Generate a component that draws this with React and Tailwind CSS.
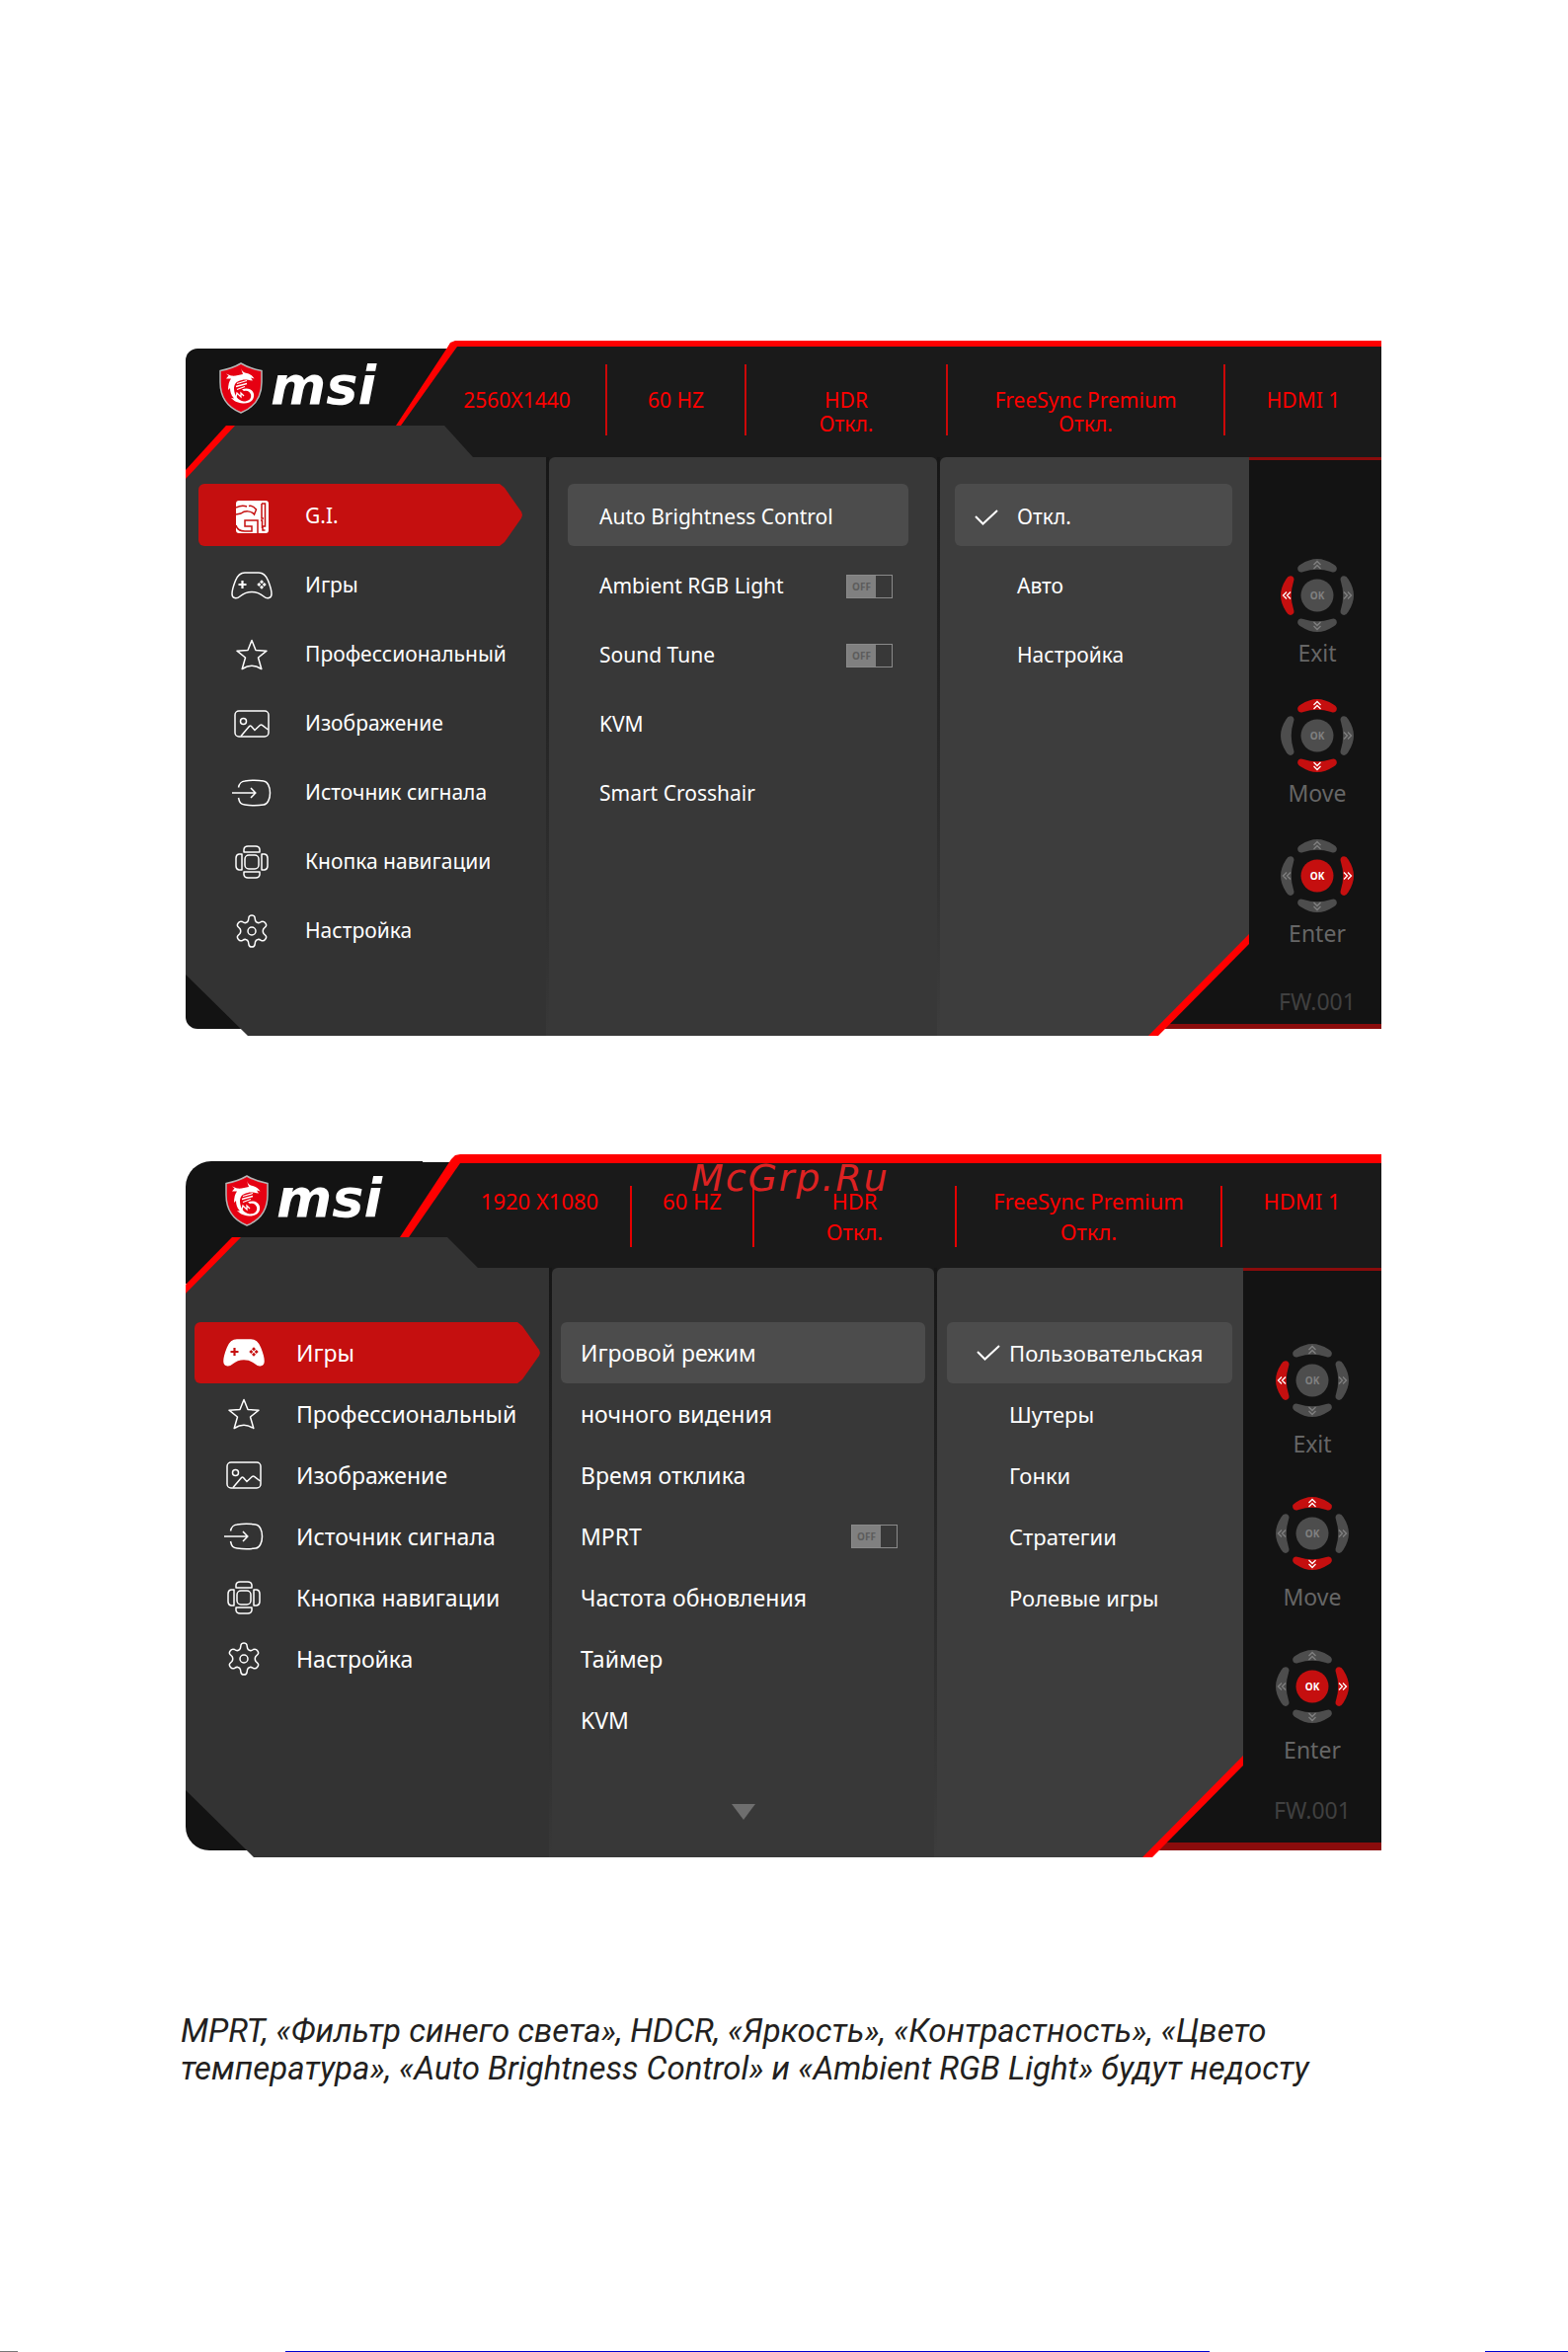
import { useState } from 'react';

const GamepadIcon = ({ filled }) => (
    <svg className="w-[42px] h-7" viewBox="0 0 42 28" fill={filled ? '#fff' : 'none'} stroke="#fff" strokeWidth="1.5" strokeLinejoin="round">
        <path d="M14 1H28C33 1 35.500 4 37.500 9C39.500 14 41 19 41 22.500C41 27 36.500 28 33 25C29.500 22 26 20.500 21 20.500S12.500 22 9 25C5.500 28 1 27 1 22.500C1 19 2.500 14 4.500 9C6.500 4 9 1 14 1Z" />
        <path d="M11.500 9V17M7.500 13H15.500" stroke={filled ? '#c50f0f' : '#fff'} strokeWidth="2.200" />
        <g fill={filled ? '#c50f0f' : '#fff'} stroke="none">
            <path d="M31 8.300L33 10.300L31 12.300L29 10.300ZM31 13.700L33 15.700L31 17.700L29 15.700ZM28.300 11L30.300 13L28.300 15L26.300 13ZM33.700 11L35.700 13L33.700 15L31.700 13Z" />
        </g>
    </svg>
);

const GiIcon = () => (
    <svg className="size-[33px]" viewBox="0 0 33 33" fill="none">
        <rect width="33" height="33" rx="3" fill="#fff" />
        <g stroke="#c50f0f" strokeWidth="1.500">
            <path d="M0 7C4 5 7 4.500 11 6M13 5.500C16 4.500 18 6 20.500 9L18.500 14C15 10 9 10 5 13L0 14" />
            <path d="M0 25C1 29 5 31 9 31H16V26H9V20H22V33" />
            <path d="M26 3H29.500V26H27V30H29.500M26 3V18H28M25 20H26.500V28" />
        </g>
    </svg>
);

const StarIcon = () => (
    <svg className="size-8" viewBox="0 0 32 32" fill="none" stroke="#fff" strokeWidth="1.500" strokeLinejoin="round">
        <path d="M16 1.500L20 11.500L31 12.200L22.500 19L25.800 30.500C22 28.200 19 27.300 16 27.300S10 28.200 6.200 30.500L9.500 19L1 12.200L12 11.500Z" />
    </svg>
);

const ImageIcon = () => (
    <svg className="w-9 h-7" viewBox="0 0 36 28" fill="none" stroke="#fff" strokeWidth="1.500">
        <rect x="1" y="1" width="34" height="26" rx="4" />
        <circle cx="9.500" cy="11.500" r="3" />
        <path d="M7 26.500L15.500 16.500Q16.500 15.500 17.500 16.500L21 20.500L26.500 15.300Q27.500 14.500 28.500 15.300L34.500 20" />
    </svg>
);

const SourceIcon = () => (
    <svg className="w-10 h-7" viewBox="0 0 40 28" fill="none" stroke="#fff" strokeWidth="1.500">
        <path d="M6.500 8.500C7.500 4 9 2.500 13 2C19 1 26 1 32 2C36 2.500 38.500 8 38.500 14S36 25.500 32 26C26 27 19 27 13 26C9 25.500 7.500 24 6.500 19" />
        <path d="M0 14H23.500M19 9L23.800 14L19 19" />
    </svg>
);

const NavKeyIcon = () => (
    <svg className="size-[34px]" viewBox="0 0 34 34" fill="none" stroke="#fff" strokeWidth="1.500" strokeLinejoin="round">
        <rect x="10" y="10" width="14" height="14" rx="4" />
        <path d="M9 7V4Q9.500 1 13 1H21Q24.500 1 25 4V7ZM9 27V30Q9.500 33 13 33H21Q24.500 33 25 30V27Z" />
        <path d="M7 9H4Q1 9.500 1 13V21Q1 24.500 4 25H7ZM27 9H30Q33 9.500 33 13V21Q33 24.500 30 25H27Z" />
    </svg>
);

const GearIcon = () => (
    <svg className="w-8 h-[34px]" viewBox="0 0 32 34" fill="none" stroke="#fff" strokeWidth="1.500" strokeLinejoin="round">
        <path d="M13 3Q13.500 1 16 1T19 3L19.500 6Q20 8 22 8.500Q23.500 9 25.500 7.500Q28 6.500 29.500 8.500Q31.500 11 30 12.500L28 14.500Q26.500 17 28 19.500L30 21.500Q31.500 23 29.500 25.500Q28 27.500 25.500 26.500Q23.500 25 22 25.500Q20 26 19.500 28L19 31Q18.500 33 16 33T13 31L12.500 28Q12 26 10 25.500Q8.500 25 6.500 26.500Q4 27.500 2.500 25.500Q.5 23 2 21.500L4 19.500Q5.500 17 4 14.500L2 12.500Q.5 11 2.500 8.500Q4 6.500 6.500 7.500Q8.500 9 10 8.500Q12 8 12.500 6Z" />
        <circle cx="16" cy="17" r="4" />
    </svg>
);

const CheckIcon = () => (
    <svg className="w-6 h-4 shrink-0" viewBox="0 0 24 16" fill="none" stroke="#fff" strokeWidth="2">
        <path d="M1 7L8.500 14.500L23 1" />
    </svg>
);

const Shield = () => (
    <svg className="w-11 h-[52px]" viewBox="0 0 44 52" fill="none">
        <path d="M22 1C27 4 35 7 43 8.500V20C43 34 37 45 22 51C7 45 1 34 1 20V8.500C9 7 17 4 22 1Z" fill="#e60012" stroke="#b5b5b5" strokeWidth="1.500" />
        <path d="M22 6C23 9 25 10.500 28 11C32 12 34 14 35.500 16.500L32 15.500L34 18.500C29 18 26 17 23 18C17 19 15 22 15 27C15.500 34 19 38.500 25 39.500C30 39.500 33 36.500 32 32.500C31 29 28 28 25 29L23 27.500C28 25 34 27 35 32C36 38 31 42 24 41.500C18 41 15 39 12 36L15 36.500C12 33 11 30 11 26L9 28C9 23 10 19 12 16.500L7 16.500L9.500 13.500L7 11.500L12 13.500C16 14 20 13 24 12Z" fill="#fff" />
        <path d="M18 21.500L28 18.500M17 24.500L28 21.500M18 27.500L26 24.500M13 33L17 35L18 31L22 35V31L25 34" stroke="#fff" strokeWidth="1.300" />
    </svg>
);

const LOBES = ['up', 'right', 'down', 'left'];
const TURN = { up: 'rotate(0 38 38)', right: 'rotate(90 38 38)', down: 'rotate(180 38 38)', left: 'rotate(270 38 38)' };

const Pad = ({ active, bare }) => (
    <svg className="size-[76px]" viewBox="0 0 76 76">
        {LOBES.map((side) => (
            <g key={side} transform={TURN[side]}>
                <path
                    d="M21.500 6.500Q30 1 38 1T54.500 6.500Q59 9 57.500 12.500Q56 15.500 52 14Q38 9.500 24 14Q20 15.500 18.500 12.500Q17 9 21.500 6.500Z"
                    fill={active.includes(side) ? '#c50f0f' : '#4d4d4d'}
                />
                {bare !== side && (
                    <path
                        d="M34.500 7L38 3.500L41.500 7M34.500 11L38 7.500L41.500 11"
                        fill="none"
                        stroke={active.includes(side) ? '#fff' : '#808080'}
                        strokeWidth="1.300"
                    />
                )}
            </g>
        ))}
        <circle cx="38" cy="38" r="16.500" fill={active.includes('ok') ? '#c50f0f' : '#4d4d4d'} />
        <text x="38" y="42" textAnchor="middle" className="text-[10px] font-bold" fill={active.includes('ok') ? '#fff' : '#808080'}>OK</text>
    </svg>
);

const Toggle = ({ id }) => (
    <span className="grid w-[47px] h-6 items-center">
        <input
            id={id}
            type="checkbox"
            className="appearance-none col-start-1 row-start-1 w-full h-full border border-[#8a8a8a] bg-[linear-gradient(to_right,#808080_29px,#383838_29px)]"
        />
        <span className="col-start-1 row-start-1 pl-[6px] text-[10px] leading-6 font-bold text-[#5c5c5c] pointer-events-none">OFF</span>
    </span>
);

const MENU = {
    games: { label: 'Игры', icon: <GamepadIcon /> },
    pro: { label: 'Профессиональный', icon: <StarIcon /> },
    image: { label: 'Изображение', icon: <ImageIcon /> },
    source: { label: 'Источник сигнала', icon: <SourceIcon /> },
    navkey: { label: 'Кнопка навигации', icon: <NavKeyIcon /> },
    setup: { label: 'Настройка', icon: <GearIcon /> },
};

const SCREENS = [
    {
        id: 'gi',
        text: 'text-[21px]',
        // header
        header: 'h-[118px]',
        brandBg: 'top-2 rounded-tl-xl',
        brand: 'pt-[22px] pl-[34px]',
        redShape: '[clip-path:polygon(213px_86px,265px_7px,268px_2px,273px_0,100%_0,100%_100%,240px_100%)]',
        darkShape: '[clip-path:polygon(218px_86px,275px_6px,100%_6px,100%_100%,240px_100%)]',
        info: 'mt-6 h-[72px] ml-[246px] grid-cols-[181fr_141fr_204fr_281fr_158fr]',
        cell: 'pt-6 leading-6 border-[#cc0808]',
        status: [['2560X1440'], ['60 HZ'], ['HDR', 'Откл.'], ['FreeSync Premium', 'Откл.'], ['HDMI 1']],
        // columns
        nav: 'w-[365px] -mt-8 pt-[59px] pb-[76px] pl-[13px] pr-6 gap-[7px]',
        navRed: '[clip-path:polygon(41px_0,60px_0,0_64px,0_45px)]',
        navShape: '[clip-path:polygon(50px_0,262px_0,291px_32px,100%_32px,100%_100%,63px_100%,0_calc(100%-62px),0_54px)]',
        corner: 'rounded-bl-xl',
        navItem: 'h-[63px] pl-[33px] pt-[3px] gap-[33px]',
        mid: 'w-[393px] pt-[27px] pl-[19px] pr-[29px] gap-[7px]',
        midItem: 'h-[63px] pt-1 pl-8 pr-4',
        right: 'pt-[27px] pl-[15px] pr-[17px] gap-[7px]',
        rightItem: 'h-[63px] pt-1 pl-5',
        checkBox: 'w-[43px]',
        side: 'w-[134px] pt-[102px] pl-1',
        sideBorder: 'border-b-[5px]',
        pads: 'gap-[26px]',
        padLabel: 'leading-10',
        fw: 'mt-[31px]',
        bare: 'left',
        menu: [{ label: 'G.I.', icon: <GiIcon /> }, MENU.games, MENU.pro, MENU.image, MENU.source, MENU.navkey, MENU.setup],
        options: [
            { label: 'Auto Brightness Control' },
            { label: 'Ambient RGB Light', toggle: true },
            { label: 'Sound Tune', toggle: true },
            { label: 'KVM' },
            { label: 'Smart Crosshair' },
        ],
        values: ['Откл.', 'Авто', 'Настройка'],
    },
    {
        id: 'games',
        text: 'text-[22px]',
        header: 'h-[115px]',
        brandBg: 'top-[7px] rounded-tl-[26px]',
        brand: 'pt-[21px] pl-10',
        redShape: '[clip-path:polygon(217px_84px,269px_5px,273px_1px,278px_0,100%_0,100%_100%,240px_100%)]',
        darkShape: '[clip-path:polygon(226px_84px,278px_9px,100%_9px,100%_100%,240px_100%)]',
        info: 'mt-8 h-[60px] ml-[267px] grid-cols-[185fr_124fr_205fr_269fr_161fr]',
        cell: 'leading-[31px] border-[#e60000]',
        status: [['1920 X1080'], ['60 HZ'], ['HDR', 'Откл.'], ['FreeSync Premium', 'Откл.'], ['HDMI 1']],
        nav: 'w-[368px] -mt-[31px] pt-[86px] pb-[76px] pl-[9px] pr-[9px] text-[23px]',
        navRed: '[clip-path:polygon(47px_0,66px_0,0_68px,0_48px)]',
        navShape: '[clip-path:polygon(56px_0,265px_0,296px_31px,100%_31px,100%_100%,69px_100%,0_calc(100%-68px),0_57px)]',
        corner: 'rounded-bl-3xl',
        navItem: 'h-[62px] pl-[29px] gap-[32px]',
        mid: 'w-[387px] pt-[55px] pb-[38px] px-[9px] text-[23px]',
        midItem: 'h-[62px] pl-5 pr-7',
        right: 'pt-[55px] pl-[10px] pr-[11px]',
        rightItem: 'h-[62px] pl-[30px]',
        checkBox: 'w-[33px]',
        side: 'w-[140px] pt-[76px]',
        sideBorder: 'border-b-8',
        pads: 'gap-[27px]',
        padLabel: 'leading-[52px]',
        fw: 'mt-[17px]',
        menu: [{ label: 'Игры', icon: <GamepadIcon filled /> }, MENU.pro, MENU.image, MENU.source, MENU.navkey, MENU.setup],
        options: [
            { label: 'Игровой режим' },
            { label: 'ночного видения' },
            { label: 'Время отклика' },
            { label: 'MPRT', toggle: true },
            { label: 'Частота обновления' },
            { label: 'Таймер' },
            { label: 'KVM' },
        ],
        more: true,
        values: ['Пользовательская', 'Шутеры', 'Гонки', 'Стратегии', 'Ролевые игры'],
    },
];

function StatusBar({ screen }) {
    return (
        <header className={`relative ${screen.header}`}>
            <div className={`absolute left-0 -bottom-4 w-60 bg-[#131313] ${screen.brandBg}`} />
            <div className={`absolute left-60 bottom-0 w-20 bg-[#131313] top-2`} />
            <div className={`absolute inset-0 bg-[#ff0000] ${screen.redShape}`} />
            <div className={`absolute inset-0 bg-[#1a1a1a] ${screen.darkShape}`} />
            <div className="relative flex">
                <div className={`w-0 flex items-start gap-2 ${screen.brand}`}>
                    <span className="shrink-0"><Shield /></span>
                    <span className="text-white font-['DejaVu_Sans'] font-bold italic text-[54px] leading-[48px]">msi</span>
                </div>
                <dl className={`absolute left-0 right-0 grid text-center text-[#ff0000] ${screen.info}`}>
                    {screen.status.map(([name, value], i) => (
                        <div key={name} className={`${screen.cell} ${i < 4 ? 'border-r-2' : ''}`}>
                            <dt>{name}</dt>
                            {value && <dd>{value}</dd>}
                        </div>
                    ))}
                </dl>
            </div>
        </header>
    );
}

function Osd({ screen }) {
    const [section, setSection] = useState(0);
    const [option, setOption] = useState(0);
    const [value, setValue] = useState(0);

    return (
        <section className={`text-white ${screen.text}`}>
            <StatusBar screen={screen} />

            <div className="relative flex">
                <div className={`absolute right-0 top-0 bottom-[7px] w-60 bg-[#131313] border-t-[3px] border-[#8b0c0c] ${screen.sideBorder}`} />
                <div className="absolute left-80 right-40 top-0 h-3 bg-[#1a1a1a]" />

                {/* Sections */}
                <nav className={`relative shrink-0 flex flex-col ${screen.nav}`}>
                    <div className={`absolute left-0 bottom-[7px] w-20 h-24 bg-[#131313] ${screen.corner}`} />
                    <div className={`absolute inset-0 bg-[#ff0000] ${screen.navRed}`} />
                    <div className={`absolute inset-0 bg-[#333333] ${screen.navShape}`} />
                    {screen.menu.map((item, i) => (
                        <button
                            key={item.label}
                            onClick={() => setSection(i)}
                            className={`relative flex items-center text-left rounded-md ${screen.navItem} ${section === i ? 'bg-[#c50f0f] [clip-path:polygon(0_0,calc(100%-23px)_0,calc(100%-18px)_4px,calc(100%-1px)_45%,100%_50%,calc(100%-1px)_55%,calc(100%-18px)_calc(100%-4px),calc(100%-23px)_100%,0_100%)]' : ''}`}
                        >
                            <span className="w-[42px] shrink-0 flex justify-center">{item.icon}</span>
                            <span>{item.label}</span>
                        </button>
                    ))}
                </nav>

                <div className="relative w-[3px] shrink-0 bg-linear-to-b from-[#161616] to-[#383838]" />

                {/* Options of the section */}
                <div className={`relative shrink-0 flex flex-col rounded-t-md bg-[#383838] ${screen.mid}`}>
                    {screen.options.map((item, i) => item.toggle ? (
                        <label key={item.label} htmlFor={`${screen.id}-${i}`} className={`flex items-center justify-between ${screen.midItem}`}>
                            <span>{item.label}</span>
                            <Toggle id={`${screen.id}-${i}`} />
                        </label>
                    ) : (
                        <button
                            key={item.label}
                            onClick={() => setOption(i)}
                            className={`flex items-center text-left rounded-md ${screen.midItem} ${option === i ? 'bg-[#4c4c4c]' : ''}`}
                        >
                            {item.label}
                        </button>
                    ))}
                    {screen.more && (
                        <svg className="w-6 h-4 mt-[54px] self-center" viewBox="0 0 24 16" fill="#6e6e6e">
                            <path d="M0 0H24L12 16Z" />
                        </svg>
                    )}
                </div>

                <div className="relative w-[3px] shrink-0 bg-linear-to-b from-[#161616] to-[#3d3d3d]" />

                {/* Values of the option */}
                <div className={`relative flex-1 flex flex-col ${screen.right}`}>
                    <div className="absolute inset-0 bg-[#ff0000] rounded-tl-md [clip-path:polygon(0_100px,100%_100px,100%_calc(100%-93px),calc(100%-92px)_100%,0_100%)]" />
                    <div className="absolute inset-0 bg-[#3d3d3d] rounded-tl-md [clip-path:polygon(0_0,100%_0,100%_calc(100%-103px),calc(100%-102px)_100%,0_100%)]" />
                    {screen.values.map((label, i) => (
                        <button
                            key={label}
                            onClick={() => setValue(i)}
                            className={`relative flex items-center text-left rounded-md ${screen.rightItem} ${value === i ? 'bg-[#4c4c4c]' : ''}`}
                        >
                            <span className={`shrink-0 ${screen.checkBox}`}>{value === i && <CheckIcon />}</span>
                            {label}
                        </button>
                    ))}
                </div>

                {/* Joystick hints */}
                <aside className={`relative shrink-0 flex flex-col items-center text-[#666666] text-[23px] ${screen.side}`}>
                    <div className={`flex flex-col items-center ${screen.pads}`}>
                        <div className="flex flex-col items-center">
                            <Pad active={['left']} />
                            <span className={screen.padLabel}>Exit</span>
                        </div>
                        <div className="flex flex-col items-center">
                            <Pad active={['up', 'down']} bare={screen.bare} />
                            <span className={screen.padLabel}>Move</span>
                        </div>
                        <div className="flex flex-col items-center">
                            <Pad active={['ok', 'right']} />
                            <span className={screen.padLabel}>Enter</span>
                        </div>
                    </div>
                    <span className={`leading-9 text-[#404040] ${screen.fw}`}>FW.001</span>
                </aside>
            </div>
        </section>
    );
}

export default function App() {
    return (
        <div className="bg-white font-['Noto_Sans',sans-serif]">
            <main className="pt-[345px] pl-[188px] pr-[189px]">
                <Osd screen={SCREENS[0]} />
                <div className="relative mt-[120px]">
                    <Osd screen={SCREENS[1]} />
                    <span className="absolute top-0 left-[512px] text-[#dd2222] font-['DejaVu_Sans'] italic text-[38px] leading-[48px] tracking-wider">McGrp.Ru</span>
                </div>
            </main>

            <p className="mt-[157px] ml-[183px] text-[#231f20] font-['Roboto'] italic text-[33px] leading-[38px]">
                MPRT, «Фильтр синего света», HDCR, «Яркость», «Контрастность», «Цвето<br />
                температура», «Auto Brightness Control» и «Ambient RGB Light» будут недосту
            </p>

            <footer className="mt-[267px] flex">
                <div className="h-px w-[18px] bg-[#777777]" />
                <div className="h-px ml-[271px] w-[936px] bg-[#0000d0]" />
                <div className="h-px ml-[279px] flex-1 bg-[#0000d0]" />
            </footer>
        </div>
    );
}
